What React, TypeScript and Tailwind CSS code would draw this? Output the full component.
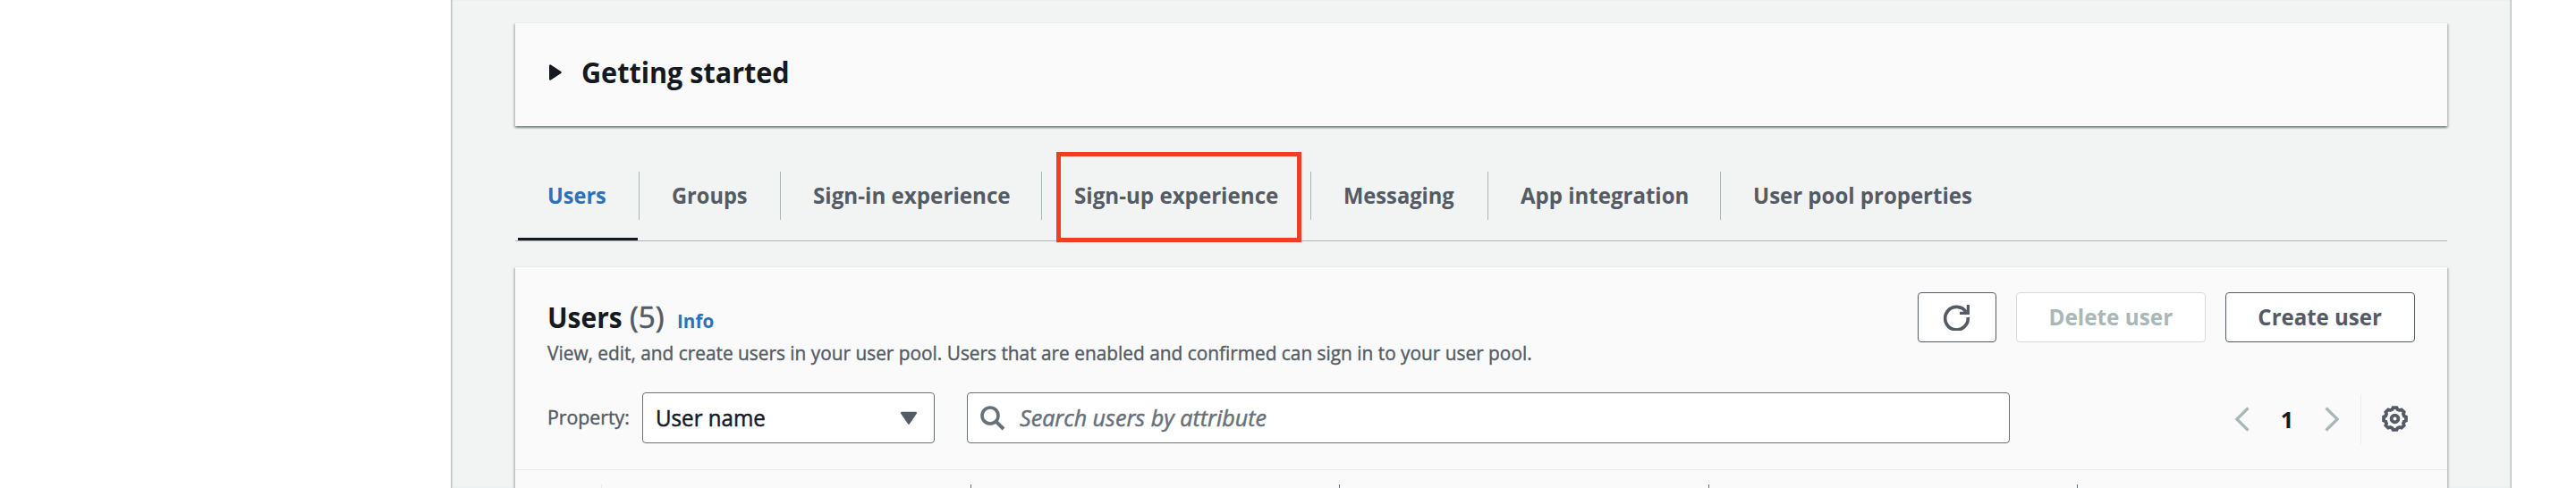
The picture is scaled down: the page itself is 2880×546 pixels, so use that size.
const GEAR_TEETH = 8;

function gearPath(center: number, outer: number, inner: number): string {
  const points: string[] = [];
  for (let i = 0; i < GEAR_TEETH; i++) {
    const base = (i * 360) / GEAR_TEETH - 90;
    const corners: [number, number][] = [
      [-16, inner],
      [-9, outer],
      [9, outer],
      [16, inner],
    ];
    for (const [offset, radius] of corners) {
      const a = ((base + offset) * Math.PI) / 180;
      points.push(
        `${(center + radius * Math.cos(a)).toFixed(2)} ${(center + radius * Math.sin(a)).toFixed(2)}`
      );
    }
  }
  return `M${points.join("L")}Z`;
}

function GearIcon() {
  return (
    <svg width="29" height="29" viewBox="0 0 29 29" fill="none" stroke="#545b64" strokeWidth="3.8">
      <path d={gearPath(14.5, 12.6, 10.8)} strokeLinejoin="miter" />
      <circle cx="14.5" cy="14.5" r="3.9" />
    </svg>
  );
}

function RefreshIcon() {
  return (
    <svg width="29" height="29" viewBox="0 0 29 29" fill="none" stroke="#545b64" strokeWidth="3.7">
      <path d="M27.2 14A12.8 12.8 0 1 1 25.2 8.2" />
      <path d="M27.4 0V9.3H18" strokeWidth="3.3" />
    </svg>
  );
}

function SearchIcon() {
  return (
    <svg width="28" height="28" viewBox="0 0 28 28" fill="none" stroke="#687078" strokeWidth="3.6">
      <circle cx="11" cy="11" r="9" />
      <path d="M17.3 17.3L26 26" strokeWidth="4" />
    </svg>
  );
}

function Chevron({ flip = false }: { flip?: boolean }) {
  return (
    <svg
      width="17"
      height="28"
      viewBox="0 0 17 28"
      fill="none"
      stroke="#aab7b8"
      strokeWidth="3.2"
      className={flip ? "-scale-x-100" : ""}
    >
      <path d="M15.5 1.5L2.8 14L15.5 26.5" />
    </svg>
  );
}

const tabs = [
  { label: "Users", width: "w-[139px]", scale: "scale-x-[0.923]" },
  { label: "Groups", width: "w-[158px]", scale: "scale-x-[0.925]" },
  { label: "Sign-in experience", width: "w-[292px]", scale: "scale-x-[0.948]" },
  { label: "Sign-up experience", width: "w-[301px]", scale: "scale-x-[0.947]" },
  { label: "Messaging", width: "w-[198px]", scale: "scale-x-[0.929]" },
  { label: "App integration", width: "w-[260px]", scale: "scale-x-[0.942]" },
  { label: "User pool properties", width: "w-[300px]", scale: "scale-x-[0.941]" },
];

const cardShadow =
  "shadow-[0_2px_2px_0_rgba(0,28,36,0.3),2px_2px_2px_0_rgba(0,28,36,0.15),-2px_2px_2px_0_rgba(0,28,36,0.15)]";

function GettingStarted() {
  return (
    <section className={`mt-[25px] flex h-[116px] shrink-0 items-start border-t border-[#eaeded] bg-[#fafafa] pl-[37px] ${cardShadow}`}>
      <svg width="16" height="20" viewBox="0 0 16 20" className="mt-[45px] shrink-0">
        <path
          d="M2.2 2.5V17.5L13.6 10Z"
          fill="#16191f"
          stroke="#16191f"
          strokeWidth="2.4"
          strokeLinejoin="round"
        />
      </svg>
      <h2 className="ml-[21px] mt-[35px] origin-left scale-x-[0.94] text-[32.5px] font-bold leading-[40px] text-[#16191f]">
        Getting started
      </h2>
    </section>
  );
}

function TabBar() {
  return (
    <nav className="mt-[30px] flex h-[99px] shrink-0 items-start border-b border-[#aab7b8]">
      {tabs.map((tab, i) => (
        <div
          key={tab.label}
          className={`relative mt-[21px] flex h-[54px] shrink-0 items-center whitespace-nowrap pl-[36px] pb-[2px] ${tab.width} ${
            i < tabs.length - 1 ? "border-r border-[#aab7b8]" : ""
          }`}
        >
          <span
            className={`origin-left text-[25.5px] font-bold leading-[36px] ${tab.scale} ${
              i === 0 ? "text-[#2d72b8]" : "text-[#545b64]"
            }`}
          >
            {tab.label}
          </span>
          {i === 0 && <span className="absolute left-[3px] top-[74px] h-[3px] w-[134px] bg-[#16191f]" />}
          {tab.label === "Sign-up experience" && (
            <span className="absolute left-[16px] top-[-22px] h-[101px] w-[274px] border-[5px] border-[#eb4025]" />
          )}
        </div>
      ))}
    </nav>
  );
}

function UsersHeader() {
  return (
    <header className="flex h-[112px] items-start justify-between pl-[36px] pr-[36px]">
      <div className="pt-[8px]">
        <div className="flex h-[40px] items-baseline leading-[40px]">
          <h2 className="w-[92px] origin-left scale-x-[0.92] text-[32.5px] font-bold text-[#16191f]">Users</h2>
          <span className="w-[53px] origin-left scale-x-[1.02] text-[32.5px] text-[#545b64] [-webkit-text-stroke:0.6px]">(5)</span>
          <a className="origin-left scale-x-[0.96] text-[21.5px] font-bold text-[#2d72b8]">Info</a>
        </div>
        <p className="mt-[4px] origin-left scale-x-[0.969] whitespace-nowrap text-[21.5px] leading-[32px] text-[#545b64] [-webkit-text-stroke:0.4px]">
          View, edit, and create users in your user pool. Users that are enabled and confirmed can sign in to your user pool.
        </p>
      </div>
      <div className="flex gap-[22px] text-[25.5px] font-bold leading-[36px]">
        <button className="flex h-[56px] w-[88px] items-center justify-center rounded-[4px] border border-[#545b64] bg-white pr-px pt-px">
          <RefreshIcon />
        </button>
        <button className="flex h-[56px] w-[212px] items-center justify-center rounded-[4px] border border-[#d5dbdb] bg-white pb-[2px] text-[#aab7b8]">
          <span className="scale-x-[0.953] whitespace-nowrap">Delete user</span>
        </button>
        <button className="flex h-[56px] w-[212px] items-center justify-center rounded-[4px] border border-[#545b64] bg-white pb-[2px] text-[#545b64]">
          <span className="scale-x-[0.941] whitespace-nowrap">Create user</span>
        </button>
      </div>
    </header>
  );
}

function FilterBar() {
  return (
    <div className="flex h-[57px] items-center pl-[36px] pr-[44px]">
      <label className="w-[106px] origin-left scale-x-[0.99] whitespace-nowrap pb-[2px] text-[21.5px] leading-[32px] text-[#545b64] [-webkit-text-stroke:0.4px]">
        Property:
      </label>
      <div className="flex h-[57px] w-[327px] items-center justify-between rounded-[4px] border border-[#687078] bg-white pl-[14px] pr-[18px]">
        <span className="origin-left scale-x-[0.965] pb-[2px] text-[25px] leading-[36px] text-[#16191f] [-webkit-text-stroke:0.5px]">
          User name
        </span>
        <svg width="20" height="16" viewBox="0 0 20 16">
          <path
            d="M2.2 2H17.8L10 13.6Z"
            fill="#545b64"
            stroke="#545b64"
            strokeWidth="2.4"
            strokeLinejoin="round"
          />
        </svg>
      </div>
      <div className="ml-[36px] flex h-[57px] w-[1166px] items-center rounded-[4px] border border-[#687078] bg-white pl-[14px]">
        <SearchIcon />
        <span className="ml-[16px] origin-left scale-x-[1.004] pb-[2px] text-[25px] italic leading-[36px] text-[#687078] [-webkit-text-stroke:0.5px]">
          Search users by attribute
        </span>
      </div>
      <div className="ml-auto flex h-[57px] items-center pt-[2px]">
        <Chevron />
        <span className="w-[84px] text-center text-[25.5px] font-bold leading-[36px] text-[#16191f]">1</span>
        <Chevron flip />
        <span className="ml-[23px] h-[56px] w-px bg-[#eaeded]" />
        <span className="ml-[23px]">
          <GearIcon />
        </span>
      </div>
    </div>
  );
}

function TableHead() {
  return (
    <div className="mt-[29px] flex h-[40px] border-t border-[#eaeded] pt-[16px]">
      <span className="h-full w-[97px] shrink-0 border-r border-[#eaeded]" />
      <span className="h-full w-[413px] shrink-0 border-r border-[#687078]" />
      <span className="h-full w-[412px] shrink-0 border-r border-[#687078]" />
      <span className="h-full w-[413px] shrink-0 border-r border-[#687078]" />
      <span className="h-full w-[412px] shrink-0 border-r border-[#687078]" />
    </div>
  );
}

export default function App() {
  return (
    <div className="flex h-[546px] w-[2880px] overflow-hidden bg-white font-['Open_Sans','Noto_Sans',sans-serif]">
      <aside className="w-[504px] shrink-0 bg-white" />
      <main className="flex h-[546px] w-[2304px] shrink-0 flex-col overflow-hidden border-x border-[#b9c1c1] bg-[#f2f3f3] px-[71px] shadow-[inset_1px_0_1px_0_#d5dada,inset_-1px_0_1px_0_#d5dada]">
        <GettingStarted />
        <TabBar />
        <section className={`mt-[28px] h-[300px] shrink-0 border-t border-[#eaeded] bg-[#fafafa] pt-[28px] ${cardShadow}`}>
          <UsersHeader />
          <FilterBar />
          <TableHead />
        </section>
      </main>
    </div>
  );
}
